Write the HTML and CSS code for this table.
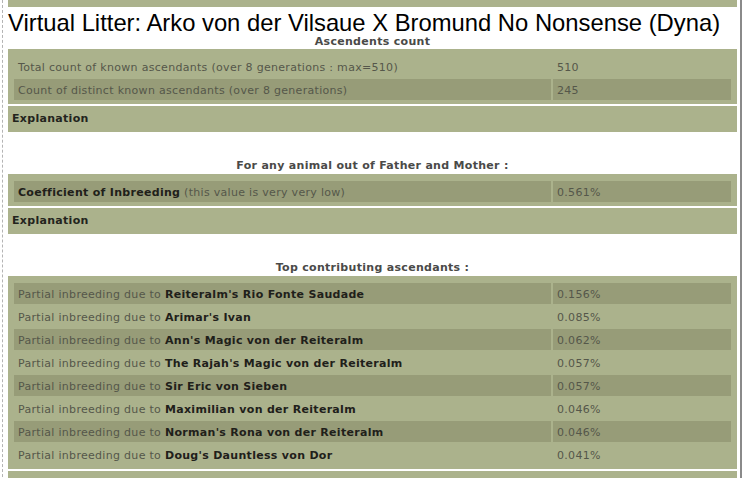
FILE: index.html
```html
<!DOCTYPE html>
<html lang="en">
<head>
    <meta charset="UTF-8">
    <title>Virtual Litter</title>
    <link rel="stylesheet" href="styles.css">
</head>
<body>
<div class="page">
    <div class="topbar"></div>
    <h1 class="title">Virtual Litter: Arko von der Vilsaue X Bromund No Nonsense (Dyna)</h1>

    <div class="caption first">Ascendents count</div>
    <div class="panel">
        <div class="row">
            <div class="cell">Total count of known ascendants (over 8 generations : max=510)</div>
            <div class="cell">510</div>
        </div>
        <div class="row dark">
            <div class="cell">Count of distinct known ascendants (over 8 generations)</div>
            <div class="cell">245</div>
        </div>
    </div>
    <div class="explain">Explanation</div>

    <div class="caption">For any animal out of Father and Mother :</div>
    <div class="panel">
        <div class="row dark">
            <div class="cell"><b>Coefficient of Inbreeding</b> (this value is very very low)</div>
            <div class="cell">0.561%</div>
        </div>
    </div>
    <div class="explain">Explanation</div>

    <div class="caption">Top contributing ascendants :</div>
    <div class="panel">
        <div class="row dark">
            <div class="cell">Partial inbreeding due to <b>Reiteralm's Rio Fonte Saudade</b></div>
            <div class="cell">0.156%</div>
        </div>
        <div class="row">
            <div class="cell">Partial inbreeding due to <b>Arimar's Ivan</b></div>
            <div class="cell">0.085%</div>
        </div>
        <div class="row dark">
            <div class="cell">Partial inbreeding due to <b>Ann's Magic von der Reiteralm</b></div>
            <div class="cell">0.062%</div>
        </div>
        <div class="row">
            <div class="cell">Partial inbreeding due to <b>The Rajah's Magic von der Reiteralm</b></div>
            <div class="cell">0.057%</div>
        </div>
        <div class="row dark">
            <div class="cell">Partial inbreeding due to <b>Sir Eric von Sieben</b></div>
            <div class="cell">0.057%</div>
        </div>
        <div class="row">
            <div class="cell">Partial inbreeding due to <b>Maximilian von der Reiteralm</b></div>
            <div class="cell">0.046%</div>
        </div>
        <div class="row dark">
            <div class="cell">Partial inbreeding due to <b>Norman's Rona von der Reiteralm</b></div>
            <div class="cell">0.046%</div>
        </div>
        <div class="row">
            <div class="cell">Partial inbreeding due to <b>Doug's Dauntless von Dor</b></div>
            <div class="cell">0.041%</div>
        </div>
    </div>
    <div class="explain"></div>
</div>
</body>
</html>
```

FILE: styles.css
```css
body {
    margin: 0;
    background: #ffffff;
    font-family: 'DejaVu Sans', sans-serif;
    font-size: 11px;
    letter-spacing: 0.3px;
    color: #55574a;
}
.page {
    margin-left: 2px;
    width: 729px;
    min-height: 478px;
    padding: 0 3px 0 5px;
    border-left: 1px dashed #b4b4b4;
    border-right: 2px solid #8a8a8a;
}
.topbar {
    height: 7px;
    background: #abb28c;
}
.title {
    margin: 3px 0 0 0;
    font-family: 'Liberation Sans', Arial, sans-serif;
    font-size: 23.8px;
    font-weight: normal;
    letter-spacing: 0;
    line-height: 25px;
    color: #000;
    white-space: nowrap;
}
.caption {
    margin: 27px 0 2px;
    text-align: center;
    font-weight: bold;
    line-height: 13px;
    color: #4a4a48;
}
.caption.first {
    margin-top: 0;
    margin-bottom: 1px;
}
.panel {
    background: #abb28c;
    padding: 7px 6px 4px;
    display: flex;
    flex-direction: column;
    gap: 2px;
}
.row {
    display: grid;
    grid-template-columns: 537px 1fr;
    gap: 2px;
}
.cell {
    height: 20px;
    padding: 1px 4px 0;
    line-height: 21px;
    white-space: nowrap;
    overflow: hidden;
}
.row.dark .cell {
    background: #979c78;
}
.cell b {
    color: #1f201a;
}
.explain {
    margin-top: 2px;
    height: 26px;
    line-height: 26px;
    padding-left: 4px;
    background: #abb28c;
    font-weight: bold;
    color: #23241d;
}
```
